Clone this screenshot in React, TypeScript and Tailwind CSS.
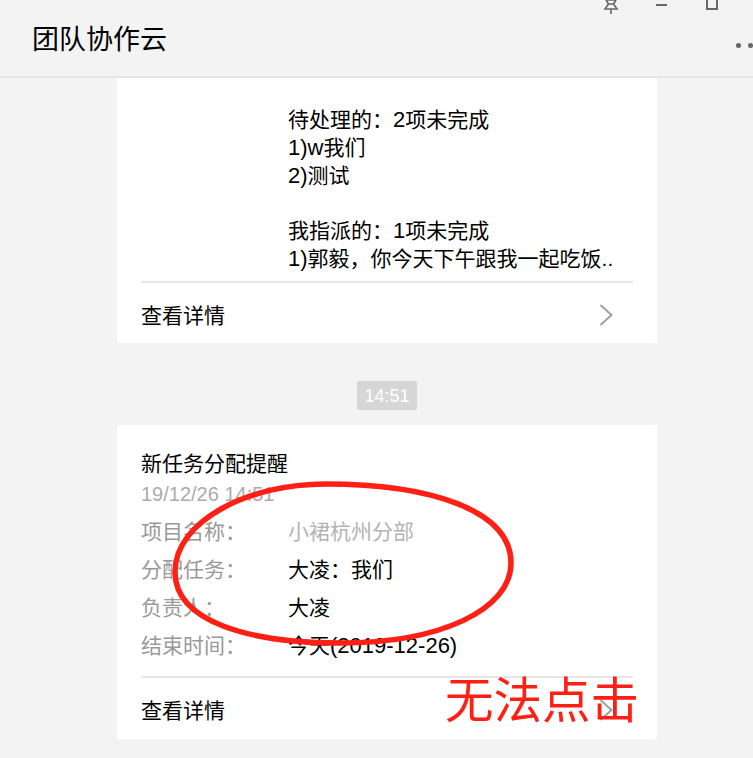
const font = "font-['Liberation_Sans','Noto_Sans_CJK_SC',sans-serif]";

function Chevron({ className }: { className?: string }) {
  return (
    <svg width="14" height="22" viewBox="0 0 14 22" fill="none" className={className}>
      <path d="M1.5 1 L12.5 11 L1.5 21" stroke="#a0a0a0" strokeWidth="2" />
    </svg>
  );
}

function CardFooter() {
  return (
    <div className="flex h-[60px] items-center justify-between pt-1">
      <span className="pt-[2px]">查看详情</span>
      <Chevron className="mr-[20px]" />
    </div>
  );
}

function InfoRow({ label, value, valueClass }: { label: string; value: React.ReactNode; valueClass?: string }) {
  return (
    <div className="flex h-[38px] items-center">
      <span className="w-[147px] text-[#999999]">{label}</span>
      <span className={valueClass}>{value}</span>
    </div>
  );
}

export default function App() {
  return (
    <div className={`relative h-[758px] w-[753px] overflow-hidden bg-[#f3f3f3] text-[21px] leading-[28px] text-black ${font}`}>
      {/* Title bar */}
      <header className="relative h-[78px] border-b-2 border-[#e6e6e6]">
        <h1 className="pl-[32px] pt-[22px] text-[27px] leading-[36px]">团队协作云</h1>
        <svg width="18" height="14" viewBox="0 0 18 14" fill="none" className="absolute left-[602px] top-0" stroke="#666666" strokeWidth="1.6">
          <path d="M4 0 L6.5 4 L3 9 H15 L11.5 4 L14 0 M9 9 V14 M4 0 L14 0 M6.5 4 H11.5" />
        </svg>
        <div className="absolute left-[656px] top-[4px] h-[2px] w-[11px] bg-[#666666]" />
        <div className="absolute left-[706px] top-[-2px] h-[12px] w-[12px] border-2 border-[#666666]" />
        <div className="absolute left-[736px] top-[43px] flex gap-[7px]">
          <div className="h-[5px] w-[5px] rounded-full bg-[#666666]" />
          <div className="h-[5px] w-[5px] rounded-full bg-[#666666]" />
        </div>
      </header>

      <main className="flex flex-col items-start pl-[117px]">
        {/* First card, cut off by the title bar */}
        <section className="h-[265px] w-[540px] rounded-b-[2px] bg-white px-6 pt-[28px]">
          <div className="ml-[147px] h-[175px]">
            <div>待处理的：<span className="text-[22px]">2</span>项未完成</div>
            <div><span className="text-[22px]">1)w</span>我们</div>
            <div><span className="text-[22px]">2)</span>测试</div>
            <div className="h-[27px]" />
            <div>我指派的：<span className="text-[22px]">1</span>项未完成</div>
            <div><span className="text-[22px]">1)</span>郭毅，你今天下午跟我一起吃饭..</div>
          </div>
          <div className="h-[2px] bg-[#e6e6e6]" />
          <CardFooter />
        </section>

        <div className="ml-[240px] mt-[38px] flex h-[29px] w-[60px] items-center justify-center rounded-[2px] bg-[#d6d6d6] pt-px text-[18px] text-white">
          14:51
        </div>

        <section className="mt-[15px] h-[314px] w-[540px] rounded-[2px] bg-white px-6 pt-[25px]">
          <div>新任务分配提醒</div>
          <div className="mt-[2px] text-[20px] text-[#ababab]">19/12/26 14:51</div>
          <div className="mt-[5px] h-[152px]">
            <InfoRow label="项目名称：" value="小裙杭州分部" valueClass="text-[#b3b3b3]" />
            <InfoRow label="分配任务：" value="大凌：我们" />
            <InfoRow label="负责人：" value="大凌" />
            <InfoRow label="结束时间：" value={<>今天<span className="text-[22px]">(2019-12-26)</span></>} />
          </div>
          <div className="mt-[11px] h-[2px] bg-[#e6e6e6]" />
          <CardFooter />
        </section>
      </main>

      {/* Red annotation on top of the screenshot */}
      <svg width="753" height="758" viewBox="0 0 753 758" fill="none" className="pointer-events-none absolute left-0 top-0">
        <path
          d="M175 572 C175 520 250 484 325 484 C430 484 511 510 511 563 C511 610 440 643 340 643 C250 643 175 622 175 572 Z"
          stroke="#ff2015"
          strokeWidth="5.5"
        />
      </svg>
      <div className="pointer-events-none absolute left-[445px] top-[667px] text-[48.5px] leading-[68px] text-[#ff2015]">无法点击</div>
    </div>
  );
}
